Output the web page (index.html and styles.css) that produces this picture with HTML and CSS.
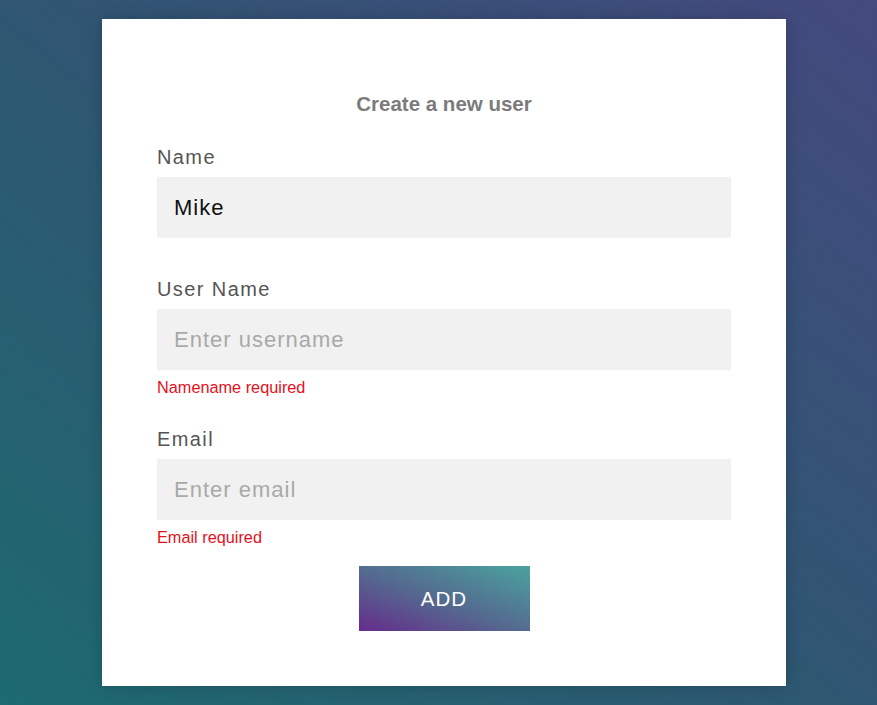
FILE: index.html
```html
<!DOCTYPE html>
<html lang="en">
<head>
<meta charset="utf-8">
<title>Create a new user</title>
<link rel="stylesheet" href="styles.css">
</head>
<body>
  <div class="card">
    <h3 class="title">Create a new user</h3>
    <form class="form">
      <div class="field">
        <label class="label" for="name">Name</label>
        <input class="input" id="name" type="text" value="Mike">
      </div>
      <div class="field">
        <label class="label" for="username">User Name</label>
        <input class="input" id="username" type="text" placeholder="Enter username">
        <div class="error">Namename required</div>
      </div>
      <div class="field field-last">
        <label class="label" for="email">Email</label>
        <input class="input" id="email" type="text" placeholder="Enter email">
        <div class="error">Email required</div>
      </div>
      <div class="actions">
        <button class="btn" type="button">ADD</button>
      </div>
    </form>
  </div>
</body>
</html>
```
FILE: styles.css
```css
* { box-sizing: border-box; }

html, body {
  margin: 0;
  height: 100%;
}

body {
  font-family: "Liberation Sans", Arial, sans-serif;
  background: linear-gradient(to top right, #1d6a70 0%, #2f5672 50%, #44497e 100%);
  padding: 19px 0;
  overflow: hidden;
}

.card {
  width: 684px;
  margin-left: 102px;
  background: #ffffff;
  padding: 55px;
  box-shadow: 0 0 14px rgba(0, 0, 0, 0.18);
}

.title {
  margin: 20px 0 33px;
  font-size: 20.5px;
  line-height: 20px;
  font-weight: bold;
  color: #7b7b7b;
  text-align: center;
}

.form {
  display: flex;
  flex-direction: column;
}

.field {
  display: flex;
  flex-direction: column;
  margin-bottom: 33px;
}

.field-last {
  margin-bottom: 20px;
}

.label {
  font-size: 20px;
  line-height: 20px;
  letter-spacing: 1.4px;
  color: #555555;
  margin-bottom: 10px;
}

.input {
  height: 61px;
  width: 100%;
  border: none;
  outline: none;
  background: #f1f1f1;
  padding: 0 17px;
  font-family: "Liberation Sans", Arial, sans-serif;
  font-size: 22px;
  letter-spacing: 1px;
  color: #111111;
  margin-bottom: 8px;
}

.input::placeholder {
  color: #a9a9a9;
}

.error {
  font-size: 16.3px;
  line-height: 18px;
  color: #e5101c;
}

.actions {
  display: flex;
  justify-content: center;
}

.btn {
  width: 171px;
  height: 65px;
  border: none;
  background: linear-gradient(to top right, #662c8c 0%, #55678f 45%, #4aa39e 100%);
  color: #ffffff;
  font-family: "Liberation Sans", Arial, sans-serif;
  font-size: 20.5px;
  letter-spacing: 1px;
  cursor: pointer;
}
```
